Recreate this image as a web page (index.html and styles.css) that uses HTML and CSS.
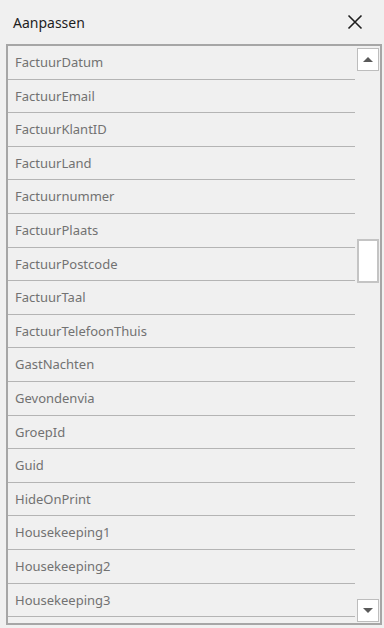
FILE: index.html
```html
<!DOCTYPE html>
<html lang="nl">
<head>
  <meta charset="UTF-8">
  <title>Aanpassen</title>
  <link rel="stylesheet" href="styles.css">
</head>
<body>

<header class="dialog-head">
  <span class="dialog-title">Aanpassen</span>
  <button class="close-btn" aria-label="Sluiten">
    <svg width="16" height="16" viewBox="0 0 16 16"><path d="M1.5 1.5 L14.5 14.5 M14.5 1.5 L1.5 14.5" stroke="#1e1e1e" stroke-width="1.6" fill="none"/></svg>
  </button>
</header>

<div class="field-box">
  <!-- field list -->
  <div class="field-list">
    <div class="field">FactuurDatum</div>
    <div class="field">FactuurEmail</div>
    <div class="field">FactuurKlantID</div>
    <div class="field">FactuurLand</div>
    <div class="field">Factuurnummer</div>
    <div class="field">FactuurPlaats</div>
    <div class="field">FactuurPostcode</div>
    <div class="field">FactuurTaal</div>
    <div class="field">FactuurTelefoonThuis</div>
    <div class="field">GastNachten</div>
    <div class="field">Gevondenvia</div>
    <div class="field">GroepId</div>
    <div class="field">Guid</div>
    <div class="field">HideOnPrint</div>
    <div class="field">Housekeeping1</div>
    <div class="field">Housekeeping2</div>
    <div class="field">Housekeeping3</div>
    <div class="field"></div>
  </div>

  <!-- scrollbar -->
  <div class="scrollbar">
    <div class="sb-btn"><span class="arrow-up"></span></div>
    <div class="sb-track"><div class="sb-thumb"></div></div>
    <div class="sb-btn"><span class="arrow-down"></span></div>
  </div>
</div>

</body>
</html>
```

FILE: styles.css
```css
body {
  margin: 0;
  background: #f0f0f0;
  font-family: "Noto Sans", "Open Sans", sans-serif;
  height: 628px;
  overflow: hidden;
}
.dialog-head {
  height: 44px;
  display: flex;
  align-items: center;
  justify-content: space-between;
  padding: 0 21px 0 13px;
}
.dialog-title {
  font-size: 14px;
  color: #1e1e1e;
}
.close-btn {
  border: none;
  background: none;
  padding: 0;
  width: 16px;
  height: 16px;
  display: flex;
}
.field-box {
  margin: 0 2px 0 6px;
  height: 577px;
  border: 2px solid #a6a6a6;
  display: flex;
  overflow: hidden;
}
.field-list {
  flex: 1;
  overflow: hidden;
}
.field {
  height: 32.6px;
  line-height: 32.6px;
  border-bottom: 1px solid #b4b4b4;
  padding-left: 7px;
  font-size: 13px;
  color: #727272;
  white-space: nowrap;
}
.scrollbar {
  width: 25px;
  display: flex;
  flex-direction: column;
  padding: 2px 2px 1px 2px;
  box-sizing: border-box;
}
.sb-btn {
  width: 22px;
  height: 23px;
  box-sizing: border-box;
  border: 1px solid #bdbdbd;
  background: #fff;
  display: flex;
  align-items: center;
  justify-content: center;
}
.arrow-up, .arrow-down {
  width: 0;
  height: 0;
  border-left: 5px solid transparent;
  border-right: 5px solid transparent;
}
.arrow-up {
  border-bottom: 5px solid #5a5a5a;
}
.arrow-down {
  border-top: 5px solid #5a5a5a;
}
.sb-track {
  flex: 1;
}
.sb-thumb {
  margin-top: 168px;
  width: 22px;
  height: 44px;
  box-sizing: border-box;
  border: 2px solid #c4c4c4;
  background: #fff;
}
```
